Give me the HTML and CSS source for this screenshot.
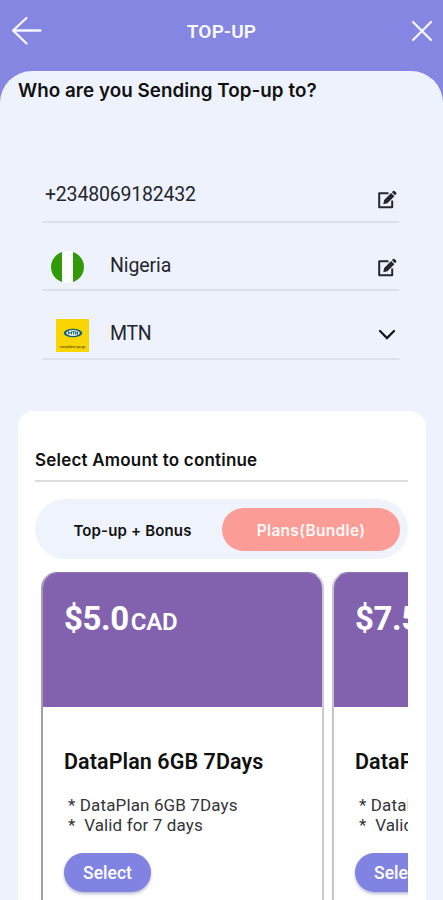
FILE: index.html
```
<!DOCTYPE html>
<html lang="en">
<head>
<meta charset="utf-8">
<title>Top-up</title>
<link rel="stylesheet" href="styles.css">
</head>
<body>
<div class="app">
  <header class="bar">
    <svg class="back" width="32" height="30" viewBox="0 0 32 30"><path d="M29.500 14.500H2M15.500 2L2 14.500l13.500 13"/></svg>
    <h1 class="title">TOP-UP</h1>
    <svg class="close" width="22" height="22" viewBox="0 0 22 22"><path d="M2 2l18 18M20 2L2 20"/></svg>
  </header>
  <main class="sheet">
    <h2 class="question">Who are you Sending Top-up to?</h2>
    <div class="fields">
      <div class="field phone">
        <span class="value">+2348069182432</span>
        <svg class="edit" width="20" height="20" viewBox="0 0 20 20"><path class="box" d="M11.500 3.200H2.200V17.300H15.200V10.500"/><path class="pen" d="M6.300 14.200l.8-4.200 7-7 3.300 3.300-7 7zM14.900 2.200L16 1.100q.8-.7 1.600 0l1.500 1.500q.8.8 0 1.600L18 5.300z"/></svg>
      </div>
      <div class="field country">
        <span class="flag"></span>
        <span class="value">Nigeria</span>
        <svg class="edit" width="20" height="20" viewBox="0 0 20 20"><path class="box" d="M11.500 3.200H2.200V17.300H15.200V10.500"/><path class="pen" d="M6.300 14.200l.8-4.200 7-7 3.300 3.300-7 7zM14.900 2.200L16 1.100q.8-.7 1.600 0l1.500 1.500q.8.800 0 1.600L18 5.300z"/></svg>
      </div>
      <div class="field network">
        <span class="mtn">
          <svg width="20" height="10" viewBox="0 0 20 10"><ellipse cx="10" cy="5" rx="9.300" ry="4.300" fill="#176078"/><ellipse cx="10" cy="5" rx="6.800" ry="2.900" fill="#e8f1e8"/><path d="M5.500 6.500v-3l1.500 2 1.500-2v3M9.200 3.700h2.600M10.500 3.700v2.800M12.500 6.500v-3l2 3v-3" fill="none" stroke="#176078" stroke-width=".9"/></svg>
          <span class="slogan">everywhere you go</span>
        </span>
        <span class="value">MTN</span>
        <svg class="chevron" width="18" height="12" viewBox="0 0 18 12"><path d="M2 2l7 7 7-7"/></svg>
      </div>
    </div>
    <section class="panel">
      <h3 class="subtitle">Select Amount to continue</h3>
      <div class="tabs">
        <span class="tab">Top-up + Bonus</span>
        <span class="tab active">Plans(Bundle)</span>
      </div>
      <div class="plans">
        <article class="plan">
          <div class="price"><span class="amount">$5.0</span><span class="currency">CAD</span></div>
          <div class="details">
            <h4 class="name">DataPlan 6GB 7Days</h4>
            <p class="line">* DataPlan 6GB 7Days</p>
            <p class="line">*&nbsp; Valid for 7 days</p>
            <button class="select">Select</button>
          </div>
        </article>
        <article class="plan">
          <div class="price"><span class="amount">$7.5</span><span class="currency">CAD</span></div>
          <div class="details">
            <h4 class="name">DataPlan 6GB 7Days</h4>
            <p class="line">* DataPlan 6GB 7Days</p>
            <p class="line">*&nbsp; Valid for 7 days</p>
            <button class="select">Select</button>
          </div>
        </article>
      </div>
    </section>
  </main>
</div>
</body>
</html>
```
FILE: styles.css
```
* { box-sizing: border-box; margin: 0; padding: 0; }
body { font-family: Roboto, sans-serif; background: #8486e2; color: #111; }
.app { height: 900px; overflow: hidden; display: flex; flex-direction: column; }
.bar { height: 71px; flex: none; display: flex; align-items: flex-start; justify-content: space-between; padding: 16px 10px 0 11px; }
.bar svg { fill: none; stroke: #f6f6ff; stroke-width: 2.3; stroke-linecap: round; stroke-linejoin: round; }
.close { margin-top: 4px; }
.title { font-size: 19px; line-height: 22px; font-weight: 600; letter-spacing: 0.2px; color: #f8f8ff; margin: 5px 0 0 -11px; }
.sheet { flex: 1; background: #eef2fd; border-radius: 32px 32px 0 0; padding: 8px 17px 0 18px; }
.question { font: 600 18.8px/24px Inter, sans-serif; letter-spacing: 0.05px; white-space: nowrap; }
.fields { margin: 61px 9px 0 24px; width: 357px; }
.field { display: flex; align-items: center; border-bottom: 2px solid #dfe1ea; }
.value { flex: 1; font-size: 19.5px; line-height: 24px; color: #23262e; }
.phone { height: 59px; padding: 0 2px 0 3px; }
.phone .value { margin-top: 4px; letter-spacing: -0.2px; }
.phone .edit { margin-top: 14px; }
.country { height: 68px; padding: 20px 2px 0 9px; }
.country .value { margin: -1px 0 0 27px; letter-spacing: -0.1px; }
.country .edit { margin-top: 3px; }
.network { height: 69px; padding: 20px 3px 0 14px; }
.network .value { margin: -1px 0 0 21px; letter-spacing: -0.3px; }
.box { fill: none; stroke: #25272e; stroke-width: 2; stroke-linejoin: round; }
.pen { fill: #25272e; }
.chevron { fill: none; stroke: #16181e; stroke-width: 2.3; stroke-linecap: round; }
.flag { width: 33px; height: 32px; margin: 1px -1px 0 0; border-radius: 50%; background: linear-gradient(90deg, #329a09 34%, #fff 34% 66%, #329a09 66%); }
.mtn { width: 33px; height: 33px; margin-top: 1px; background: #fad504; display: flex; flex-direction: column; align-items: center; padding-top: 9px; }
.mtn svg { flex: none; }
.slogan { font-size: 3px; line-height: 4px; font-weight: 700; margin-top: 7px; white-space: nowrap; color: #6c5b00; }
.panel { background: #fff; margin-top: 51px; height: 520px; border-radius: 16px; padding: 37px 18px 0 17px; }
.subtitle { font: 600 17px/24px Inter, sans-serif; letter-spacing: 0.2px; height: 34px; border-bottom: 2px solid #dcdcdf; white-space: nowrap; }
.tabs { margin-top: 17px; height: 60px; border-radius: 30px; background: #eff3fc; display: flex; align-items: center; padding: 0 8px; }
.tab { flex: 1; text-align: center; font: 600 15px/45px Inter, sans-serif; letter-spacing: 0.15px; height: 43px; white-space: nowrap; }
.tab.active { flex: 0 0 178px; border-radius: 22px; background: #fc9c96; color: #fff8f7; font-size: 15.5px; letter-spacing: 0.3px; }
.plans { margin: 13px 0 0 6px; display: flex; gap: 8px; overflow: hidden; height: 400px; }
.plan { flex: 0 0 283px; border: 2px solid #a49bbd; border-top: 1px solid #8e75b5; border-right-color: #cbc9d4; border-radius: 16px 16px 0 0; overflow: hidden; background: #fff; }
.plan + .plan { border-left-color: #c5c3ce; }
.price { height: 134px; margin: 0 -2px; background: #8262ae; padding: 27px 0 0 23px; color: #fff; font-weight: 700; line-height: 38px; white-space: nowrap; }
.amount { font-size: 33px; letter-spacing: -0.4px; }
.currency { font-size: 24px; font-weight: 600; margin-left: 2px; letter-spacing: -0.3px; }
.details { padding: 42px 0 0 21px; white-space: nowrap; }
.name { font-size: 21.5px; line-height: 26px; font-weight: 600; letter-spacing: 0.08px; margin-bottom: 20px; }
.line { font-size: 17px; line-height: 20px; letter-spacing: 0.13px; padding-left: 4px; color: #33343a; }
.select { display: block; margin-top: 18px; width: 87px; height: 39px; border: 0; border-radius: 20px; background: #8083e1; color: #fff; font: 500 17.5px/40px Roboto, sans-serif; box-shadow: 0 2px 3px #7779b080; }
```
